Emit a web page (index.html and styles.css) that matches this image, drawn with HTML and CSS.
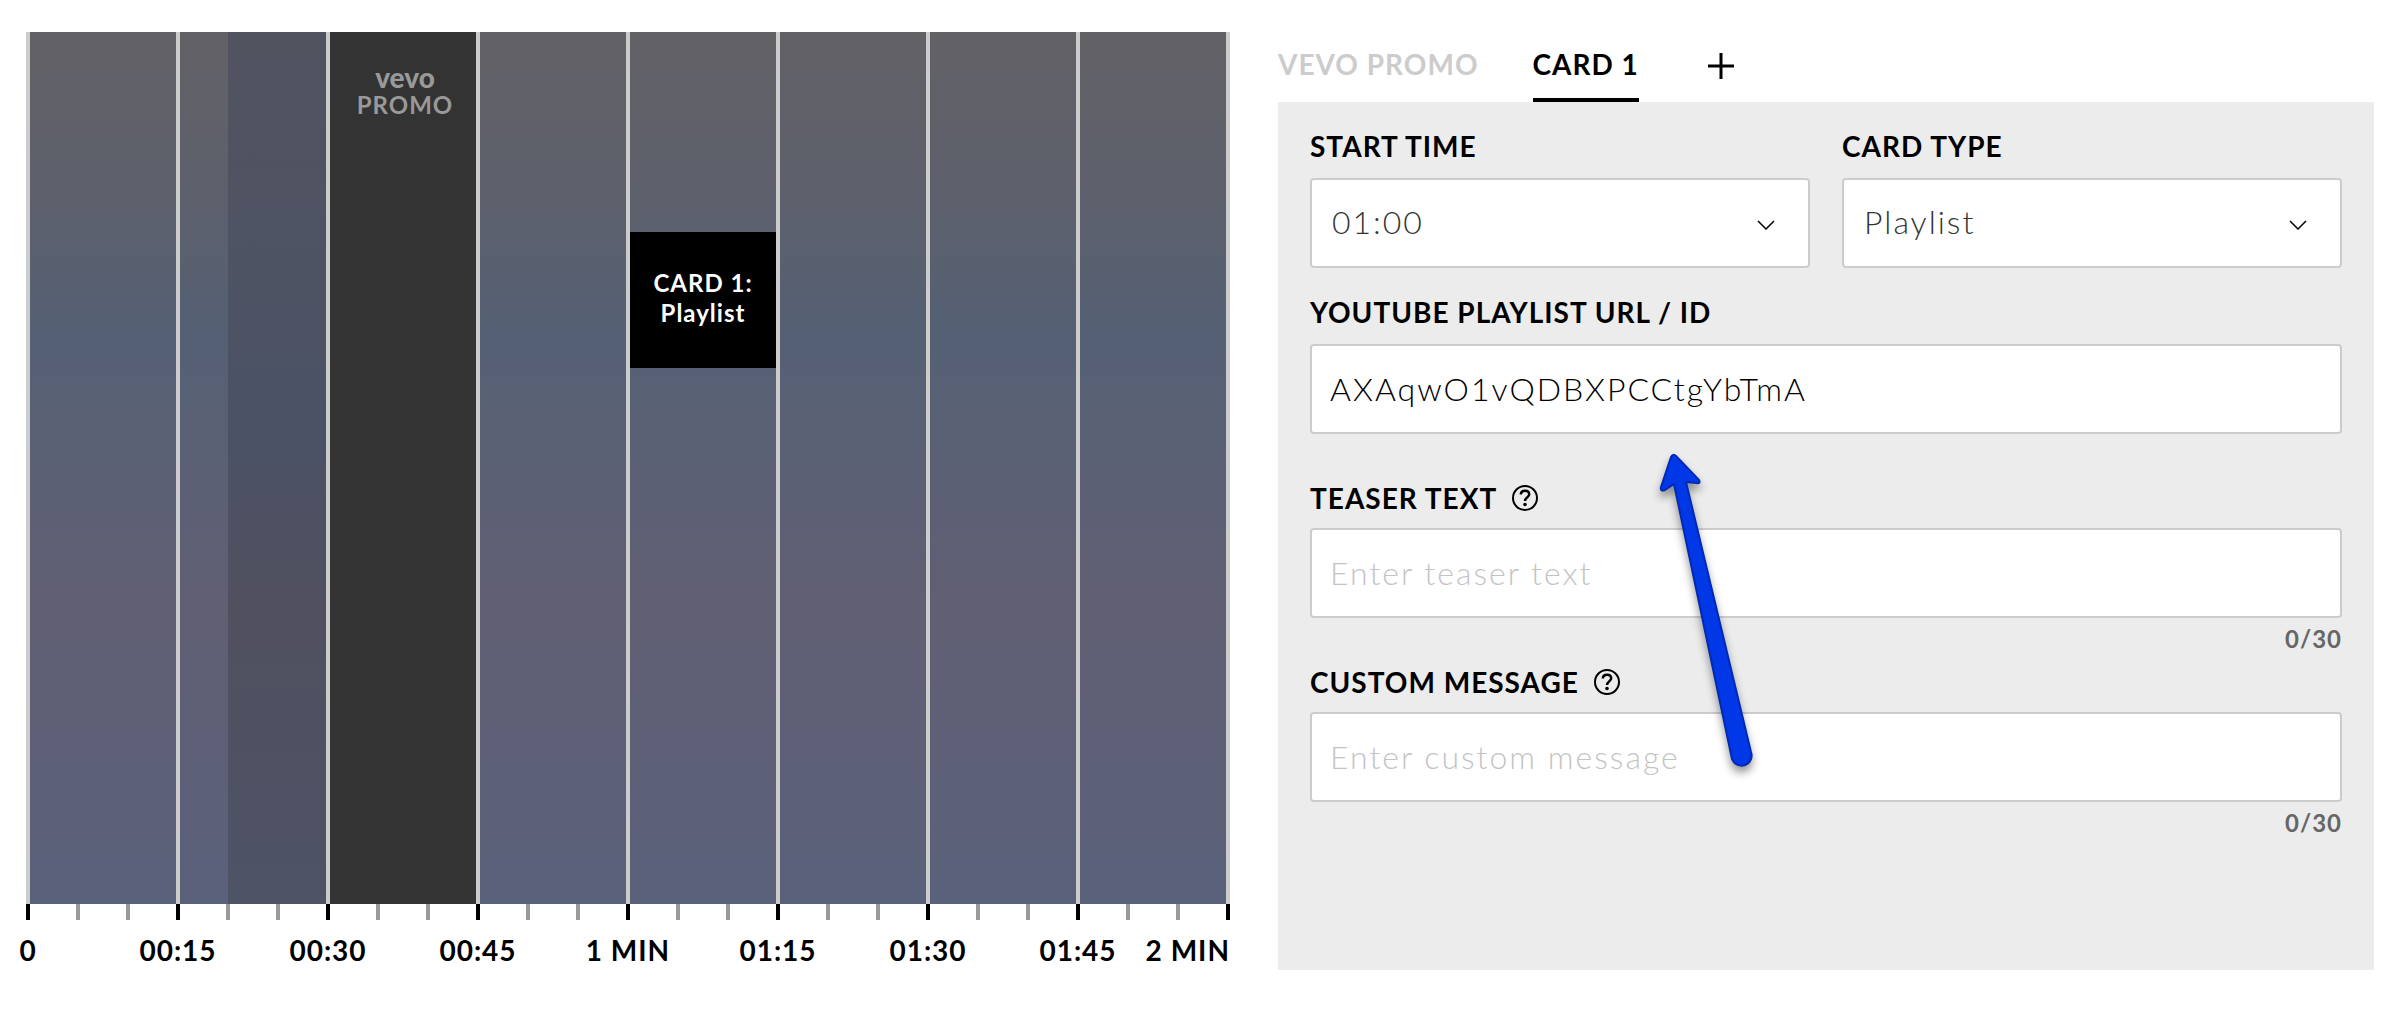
FILE: index.html
```html
<!DOCTYPE html>
<html lang="en">
<head>
<meta charset="utf-8">
<meta name="viewport" content="width=device-width, initial-scale=1">
<title>Card editor</title>
<link rel="stylesheet" href="styles.css">
</head>
<body>
<main class="editor">
  <section class="timeline" aria-label="Card timeline">
    <div class="track">
      <div class="slot"></div>
      <div class="slot"><div class="reserved" style="width: 67%"></div></div>
      <div class="slot promo">
        <span class="promo-brand">vevo</span>
        <span class="promo-name">PROMO</span>
      </div>
      <div class="slot"></div>
      <div class="slot"><div class="card">CARD 1:<br>Playlist</div></div>
      <div class="slot"></div>
      <div class="slot"></div>
      <div class="slot"></div>
    </div>
    <div class="ticks" aria-hidden="true">
      <i></i><i></i><i></i><i></i><i></i><i></i><i></i><i></i>
      <i></i><i></i><i></i><i></i><i></i><i></i><i></i><i></i>
      <i></i><i></i><i></i><i></i><i></i><i></i><i></i><i></i>
    </div>
    <div class="times">
      <div class="time"><span>0</span></div>
      <div class="time"><span>00:15</span></div>
      <div class="time"><span>00:30</span></div>
      <div class="time"><span>00:45</span></div>
      <div class="time"><span>1 MIN</span></div>
      <div class="time"><span>01:15</span></div>
      <div class="time"><span>01:30</span></div>
      <div class="time time-last"><span>01:45</span></div>
      <div class="time time-end"><span>2 MIN</span></div>
    </div>
  </section>

  <section class="details">
    <nav class="tabs">
      <button class="tab" type="button">VEVO PROMO</button>
      <button class="tab tab-active" type="button">CARD 1</button>
      <button class="tab tab-add" type="button" aria-label="Add card">
        <svg width="28" height="28" viewBox="0 0 28 28"><path d="M14 1v26M1 14h26" stroke="#000" stroke-width="3"/></svg>
      </button>
    </nav>
    <form class="panel">
      <div class="pair">
        <div class="field">
          <label for="start">START TIME</label>
          <div class="select">
            <select id="start"><option>01:00</option></select>
            <svg class="chevron" width="18" height="10" viewBox="0 0 18 10"><path d="M1 1l8 8 8-8" fill="none" stroke="#000" stroke-width="1.500"/></svg>
          </div>
        </div>
        <div class="field">
          <label for="type">CARD TYPE</label>
          <div class="select">
            <select id="type"><option>Playlist</option></select>
            <svg class="chevron" width="18" height="10" viewBox="0 0 18 10"><path d="M1 1l8 8 8-8" fill="none" stroke="#000" stroke-width="1.500"/></svg>
          </div>
        </div>
      </div>
      <div class="field">
        <label for="url">YOUTUBE PLAYLIST URL / ID</label>
        <input id="url" type="text" value="AXAqwO1vQDBXPCCtgYbTmA">
        <div class="hint"></div>
      </div>
      <div class="field">
        <label class="with-help" for="teaser">TEASER TEXT
          <svg width="28" height="28" viewBox="0 0 28 28" fill="none" stroke="#000"><circle cx="14" cy="14" r="12" stroke-width="2"/><path d="M9.800 10.500C9.900 8 11.600 6.700 14 6.700s4.200 1.400 4.200 3.600c0 3-4.200 3.200-4.200 6.700" stroke-width="2.500"/><circle cx="14" cy="20.500" r="1.800" fill="#000" stroke="none"/></svg>
        </label>
        <input id="teaser" type="text" placeholder="Enter teaser text">
        <div class="hint">0/30</div>
      </div>
      <div class="field">
        <label class="with-help" for="message">CUSTOM MESSAGE
          <svg width="28" height="28" viewBox="0 0 28 28" fill="none" stroke="#000"><circle cx="14" cy="14" r="12" stroke-width="2"/><path d="M9.800 10.500C9.900 8 11.600 6.700 14 6.700s4.200 1.400 4.200 3.600c0 3-4.200 3.200-4.200 6.700" stroke-width="2.500"/><circle cx="14" cy="20.500" r="1.800" fill="#000" stroke="none"/></svg>
        </label>
        <input id="message" type="text" placeholder="Enter custom message">
        <div class="hint">0/30</div>
      </div>
      <svg class="pointer" width="120" height="350" viewBox="0 0 120 350" aria-hidden="true">
        <path d="M22 15Q23 14 25 16L48 40Q50 44 45 43L35 42L100 312A10 10 0 0 1 81 319L23 44L14 50Q9 52 10 47L20 17Q21 15 22 15Z" fill="#0038e8" stroke="#0029b4" stroke-width="2" stroke-linejoin="round"/>
      </svg>
    </form>
  </section>
</main>
</body>
</html>
```
FILE: styles.css
```css
* {
  box-sizing: border-box;
}

body {
  margin: 0;
  background: #fff;
  color: #000;
  font-family: Lato, "Open Sans", sans-serif;
  font-size: 28px;
  line-height: 36px;
}

.editor {
  display: grid;
  grid-template-columns: 1204fr 1096fr;
  gap: 48px;
  min-height: 100vh;
  padding: 32px 34px 50px 26px;
}

.timeline,
.details {
  display: flex;
  flex-direction: column;
  min-width: 0;
}

/* Timeline */
.track {
  flex: 1;
  display: grid;
  grid-template-columns: repeat(8, 1fr);
  border-right: 4px solid #ccc;
  background: linear-gradient(#626166, #5c606c 20%, #556074 34%, #5b6074 50%, #605f74 66%, #5a617a);
}

.slot {
  display: flex;
  justify-content: flex-end;
  border-left: 4px solid #ccc;
}

.reserved {
  background: linear-gradient(#51535f, #4e5364 30%, #4b5266 45%, #50505f 66%, #4e5366);
}

.promo {
  flex-direction: column;
  justify-content: flex-start;
  align-items: center;
  padding: 32px 0 0 4px;
  background: #333;
  color: #999;
  font-size: 24px;
  line-height: 30px;
}

.promo-brand {
  font-size: 28px;
  font-weight: 900;
  line-height: 26px;
}

.promo-name {
  font-weight: 700;
  letter-spacing: 1px;
}

.card {
  width: 100%;
  height: 136px;
  margin-top: 200px;
  padding-top: 36px;
  background: #000;
  color: #fff;
  font-size: 24px;
  font-weight: 700;
  line-height: 30px;
  letter-spacing: 1px;
  text-align: center;
}

.ticks {
  display: grid;
  grid-template-columns: repeat(24, 1fr);
  height: 16px;
  border-right: 4px solid #000;
}

.ticks i {
  border-left: 4px solid #999;
}

.ticks i:nth-child(3n + 1) {
  border-color: #000;
}

.times {
  display: grid;
  grid-template-columns: repeat(8, 1fr);
  margin: 12px 0 2px;
  padding-right: 4px;
  font-weight: 700;
  letter-spacing: 1px;
  white-space: nowrap;
}

.time {
  display: flex;
  grid-row: 1;
  justify-content: center;
  width: 4px;
}

.time-last,
.time-end {
  grid-column: 8;
}

.time-end {
  justify-content: flex-end;
  justify-self: end;
  margin-right: -4px;
}

/* Tabs */
.tabs {
  display: flex;
  gap: 54px;
  height: 70px;
}

.tab {
  padding: 14px 0 16px;
  border: 0;
  border-bottom: 4px solid transparent;
  background: none;
  color: #ccc;
  font: inherit;
  font-weight: 700;
  letter-spacing: 1px;
}

.tab-active {
  border-color: #000;
  color: #000;
}

.tab-add {
  display: flex;
  align-items: center;
  margin-left: 14px;
  padding: 16px 0 14px;
}

/* Form */
.panel {
  position: relative;
  flex: 1;
  padding: 26px 32px;
  background: #ececec;
}

.pair {
  display: grid;
  grid-template-columns: 1fr 1fr;
  gap: 32px;
  margin-bottom: 26px;
}

.field label {
  display: flex;
  align-items: center;
  gap: 14px;
  margin-bottom: 14px;
  font-weight: 700;
  letter-spacing: 1px;
}

.field .with-help {
  margin-bottom: 12px;
}

.select {
  position: relative;
}

select,
input {
  display: block;
  width: 100%;
  height: 90px;
  padding: 0 18px 2px;
  border: 2px solid #ccc;
  border-radius: 4px;
  background: #fff;
  color: #000;
  font: inherit;
  font-size: 32px;
  font-weight: 300;
  letter-spacing: 2px;
}

select {
  padding: 0 20px 2px;
  appearance: none;
  color: #333;
}

input::placeholder {
  color: #c4c4c4;
  opacity: 1;
}

.chevron {
  position: absolute;
  top: 42px;
  right: 35px;
  pointer-events: none;
}

.hint {
  height: 30px;
  margin: 6px 0 10px;
  color: #666;
  font-size: 24px;
  font-weight: 700;
  line-height: 30px;
  letter-spacing: 1px;
  text-align: right;
}

.pointer {
  position: absolute;
  top: 338px;
  left: 34%;
  filter: drop-shadow(0 6px 4px rgba(0, 0, 0, 0.4));
  pointer-events: none;
}
```
